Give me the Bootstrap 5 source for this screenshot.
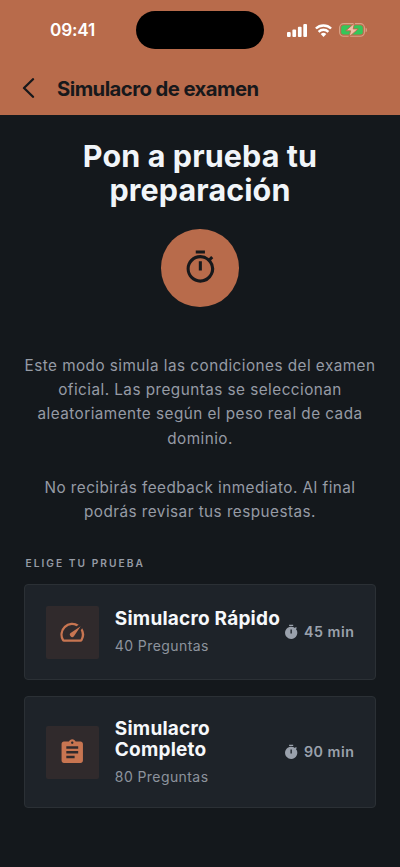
<!DOCTYPE html>
<html lang="es">
<head>
<meta charset="utf-8">
<meta name="viewport" content="width=device-width, initial-scale=1">
<title>Simulacro de examen</title>
<link href="https://cdn.jsdelivr.net/npm/bootstrap@5.3.0/dist/css/bootstrap.min.css" rel="stylesheet">
<style>
body{font-family:Inter,sans-serif;background:#14181c;color:#f1f5f9;height:867px;overflow:hidden}
svg{display:block;flex:none}
.app-header{background:#b86b4b;height:115px}
.status-bar{height:60px}
.clock{width:136px;padding-left:9px;font-size:17.2px;font-weight:600;letter-spacing:-.2px;color:#fff}
.island{width:128px;height:37.5px;border-radius:19px;background:#000}
.status-icons{width:136px;padding-left:23px}
.battery{margin-left:7px}
.app-bar{height:55px;padding-left:21px;color:#17181b}
.app-title{font-size:20.3px;font-weight:700;letter-spacing:-.56px;padding:3px 0 0 22px;line-height:1;color:#17181b}
main{padding:24px 24px 0}
.headline{font-size:30.5px;line-height:33.5px;font-weight:700;letter-spacing:.1px;color:#f1f5f9}
.hero-icon{width:77.5px;height:77.5px;background:#b86b4b;color:#17181b;margin-top:23px}
.intro{font-size:15.27px;line-height:24.43px;letter-spacing:.47px;color:#969ba5;margin-top:47px}
.section-label{font-size:10.2px;line-height:14px;font-weight:600;letter-spacing:2.04px;color:#969ba5;margin:31px 0 14px 1.5px}
.exam{background:#1e2329;border:1px solid #2b3035;border-radius:4px;padding:21px 20.5px 20px}
.exam-icon{width:53px;height:53px;border-radius:2px;background:#302a2c;color:#c87551;flex:none}
.exam-text{margin-left:16.3px;width:166px}
.exam-title{font-size:19px;line-height:21.5px;font-weight:700;letter-spacing:.22px;color:#f6f8fb}
.exam-sub{font-size:14px;line-height:20px;letter-spacing:.42px;color:#8d939d;margin-top:6px}
.exam-time{font-size:14.25px;font-weight:600;letter-spacing:.54px;color:#9aa1ac;gap:4.5px}
</style>
</head>
<body>
<header class="app-header">
  <div class="status-bar d-flex align-items-center">
    <div class="clock text-center">09:41</div>
    <div class="island"></div>
    <div class="status-icons d-flex align-items-center">
      <svg width="20" height="13" viewBox="0 0 20 13" fill="#fff"><rect y="8" width="3.7" height="5" rx="1"/><rect x="5.4" y="5.6" width="3.7" height="7.4" rx="1"/><rect x="10.9" y="2.8" width="3.7" height="10.2" rx="1"/><rect x="16.3" width="3.7" height="13" rx="1"/></svg>
      <svg class="ms-2" width="17" height="13" viewBox="0 0 17 13" fill="none" stroke="#fff" stroke-width="2.4"><path d="M.9 4.5a11 11 0 0 1 15.2 0M3.6 7.8a7 7 0 0 1 9.8 0"/><path d="M8.5 12.9 5.7 10.1a4 4 0 0 1 5.6 0z" fill="#fff" stroke="none"/></svg>
      <svg class="battery" width="28" height="14" viewBox="0 0 28 14"><rect x=".6" y=".6" width="24.8" height="12.6" rx="4" fill="none" stroke="#d9a287" stroke-width="1.1"/><path d="M26.6 4.7c1.8.5 1.8 4 0 4.5z" fill="#d9a287"/><rect x="2.2" y="2.2" width="21.6" height="9.4" rx="2.5" fill="#34c759"/><path d="M15.6 0 6.8 7.8h4.8L10 14l9.2-8.1h-5z" fill="#efc0a8" stroke="#b86b4b" stroke-width=".9"/></svg>
    </div>
  </div>
  <div class="app-bar d-flex align-items-center">
    <svg width="14" height="20" viewBox="0 0 14 20" fill="none" stroke="currentColor" stroke-width="2.3" stroke-linecap="round" stroke-linejoin="round"><path d="M12 1.2 3 10l9 8.8"/></svg>
    <h1 class="app-title mb-0">Simulacro de examen</h1>
  </div>
</header>
<main>
  <h2 class="headline text-center mb-0">Pon a prueba tu<br>preparación</h2>
  <div class="hero-icon rounded-circle mx-auto d-flex align-items-center justify-content-center">
    <svg width="36.7" height="36.7" viewBox="0 0 24 24" fill="currentColor"><path d="M15 1H9v2h6V1zm-4 13h2V8h-2v6zm8.03-6.61 1.42-1.42c-.43-.51-.9-.99-1.41-1.41l-1.42 1.42A8.96 8.96 0 0 0 12 4c-4.97 0-9 4.03-9 9s4.02 9 9 9a8.99 8.99 0 0 0 7.03-14.61zM12 20c-3.87 0-7-3.13-7-7s3.13-7 7-7 7 3.13 7 7-3.13 7-7 7z"/></svg>
  </div>
  <div class="intro text-center text-nowrap">Este modo simula las condiciones del examen<br>oficial. Las preguntas se seleccionan<br>aleatoriamente según el peso real de cada<br>dominio.<br><br>No recibirás feedback inmediato. Al final<br>podrás revisar tus respuestas.</div>
  <div class="section-label">ELIGE TU PRUEBA</div>
  <div class="d-flex flex-column gap-3">
    <div class="exam d-flex align-items-center">
      <div class="exam-icon d-flex align-items-center justify-content-center">
        <svg width="28.5" height="28.5" viewBox="0 0 24 24" fill="currentColor"><path d="m20.38 8.57-1.23 1.85a8 8 0 0 1-.22 7.58H5.07A8 8 0 0 1 15.58 6.85l1.85-1.23A10 10 0 0 0 3.35 19a2 2 0 0 0 1.72 1h13.85a2 2 0 0 0 1.74-1 10 10 0 0 0-.27-10.44zm-9.79 6.84a2 2 0 0 0 2.83 0l5.66-8.49-8.49 5.66a2 2 0 0 0 0 2.83z"/></svg>
      </div>
      <div class="exam-text text-nowrap">
        <div class="exam-title">Simulacro Rápido</div>
        <div class="exam-sub">40 Preguntas</div>
      </div>
      <div class="exam-time d-flex align-items-center text-nowrap ms-auto">
        <svg width="16.3" height="16.3" viewBox="0 0 24 24" fill="currentColor"><path d="M9 1h6v2H9zm10.03 6.39 1.42-1.42c-.43-.51-.9-.99-1.41-1.41l-1.42 1.42A8.96 8.96 0 0 0 12 4c-4.97 0-9 4.03-9 9s4.02 9 9 9a8.99 8.99 0 0 0 7.03-14.61zM13 14h-2V8h2v6z"/></svg>
        <span>45 min</span>
      </div>
    </div>
    <div class="exam d-flex align-items-center">
      <div class="exam-icon d-flex align-items-center justify-content-center">
        <svg width="28.5" height="28.5" viewBox="0 0 24 24" fill="currentColor"><path d="M19 3h-4.18C14.4 1.84 13.3 1 12 1s-2.4.84-2.82 2H5c-1.1 0-2 .9-2 2v14c0 1.1.9 2 2 2h14c1.1 0 2-.9 2-2V5c0-1.1-.9-2-2-2zm-7 0c.55 0 1 .45 1 1s-.45 1-1 1-1-.45-1-1 .45-1 1-1zm2 14H7v-2h7v2zm3-4H7v-2h10v2zm0-4H7V7h10v2z"/></svg>
      </div>
      <div class="exam-text text-nowrap">
        <div class="exam-title">Simulacro<br>Completo</div>
        <div class="exam-sub">80 Preguntas</div>
      </div>
      <div class="exam-time d-flex align-items-center text-nowrap ms-auto">
        <svg width="16.3" height="16.3" viewBox="0 0 24 24" fill="currentColor"><path d="M9 1h6v2H9zm10.03 6.39 1.42-1.42c-.43-.51-.9-.99-1.41-1.41l-1.42 1.42A8.96 8.96 0 0 0 12 4c-4.97 0-9 4.03-9 9s4.02 9 9 9a8.99 8.99 0 0 0 7.03-14.61zM13 14h-2V8h2v6z"/></svg>
        <span>90 min</span>
      </div>
    </div>
  </div>
</main>
<script src="https://cdn.jsdelivr.net/npm/bootstrap@5.3.0/dist/js/bootstrap.bundle.min.js"></script>
</body>
</html>
